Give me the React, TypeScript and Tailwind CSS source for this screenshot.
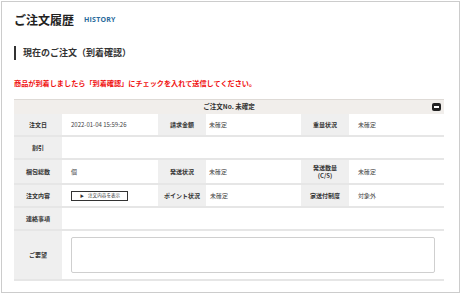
import React from "react";

const jp = { fontFamily: '"Noto Sans CJK JP", "Noto Sans", sans-serif' };

function Label({ children, className = "" }: { children: React.ReactNode; className?: string }) {
  return (
    <div className={`flex items-center justify-center bg-[#efefef] text-center text-[6px] font-bold leading-[8px] text-[#333] ${className}`}>
      {children}
    </div>
  );
}

function Value({ children, className = "" }: { children?: React.ReactNode; className?: string }) {
  return (
    <div className={`flex items-center pl-[9px] text-[6px] text-[#444] ${className}`}>{children}</div>
  );
}

const row = "grid grid-cols-[48px_96px_48px_95px_48px_95px] border-b-2 border-[#e6e6e6]";

export default function App() {
  return (
    <div className="ml-px mt-px h-[292px] w-[459px] border border-[#cccccc] bg-white" style={jp}>
      <div className="pl-[12px] pt-[10px]">
        <div className="flex h-[16px] items-center">
          <h1 className="text-[12px] font-bold leading-[16px] text-[#222]">ご注文履歴</h1>
          <span className="ml-[10px] mt-[1px] text-[7px] font-bold tracking-[0.2px] text-[#2a6b9c]" style={{ fontFamily: '"Open Sans", sans-serif' }}>
            HISTORY
          </span>
        </div>

        <div className="mt-[18px] flex h-[14px] items-center border-l-2 border-[#333] pl-[7px]">
          <h2 className="text-[9px] font-bold leading-[14px] text-[#333]">現在のご注文（到着確認）</h2>
        </div>

        <p className="mt-[18px] h-[10px] text-[7.15px] font-bold leading-[10px] text-[#f01010]">
          商品が到着しましたら「到着確認」にチェックを入れて送信してください。
        </p>

        <div className="mt-[11px] w-[430px]">
          <div className="relative flex h-[15px] items-center justify-center border-t border-[#dedad6] bg-[#f1eeeb] text-[6.5px] font-bold text-[#333]">
            ご注文No. 未確定
            <span className="absolute right-[3px] top-[3px] flex h-[8px] w-[9px] items-center justify-center rounded-[2px] bg-[#222]">
              <span className="h-[1.5px] w-[5px] bg-white" />
            </span>
          </div>

          <div className={`${row} h-[23px]`}>
            <Label>注文日</Label>
            <Value>2022-01-04 15:59:26</Value>
            <Label>請求金額</Label>
            <Value className="!pl-[3px]">未確定</Value>
            <Label>重量状況</Label>
            <Value>未確定</Value>
          </div>

          <div className={`${row} h-[23px]`}>
            <Label>割引</Label>
            <Value className="col-span-5" />
          </div>

          <div className={`${row} h-[25px]`}>
            <Label>梱包総数</Label>
            <Value>個</Value>
            <Label>発送状況</Label>
            <Value className="!pl-[3px]">未確定</Value>
            <Label>
              発送数量
              <br />
              (C/S)
            </Label>
            <Value>未確定</Value>
          </div>

          <div className={`${row} h-[23px]`}>
            <Label>注文内容</Label>
            <Value>
              <button className="flex h-[10px] w-[57px] items-center border border-[#333] bg-white pl-[8px] text-[4.6px] text-[#333]">
                <span className="mr-[4px] text-[4px]">▶</span>注文内容を表示
              </button>
            </Value>
            <Label>ポイント状況</Label>
            <Value className="!pl-[4px]">未確定</Value>
            <Label>家送付制度</Label>
            <Value>対象外</Value>
          </div>

          <div className={`${row} h-[23px]`}>
            <Label>連絡事項</Label>
            <Value className="col-span-5" />
          </div>

          <div className={`${row} h-[50px]`}>
            <Label>ご要望</Label>
            <div className="col-span-5 flex items-center pl-[9px] pr-[9px]">
              <textarea className="h-[36px] w-full resize-none rounded-[2px] border border-[#cfcfcf] bg-white" />
            </div>
          </div>
        </div>
      </div>
    </div>
  );
}
